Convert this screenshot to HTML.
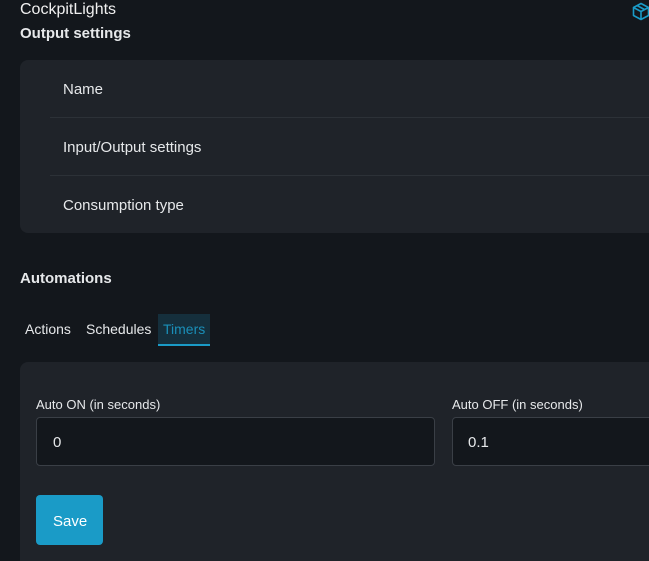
<!DOCTYPE html>
<html><head><style>
*{margin:0;padding:0;box-sizing:border-box}
html,body{width:649px;height:561px;overflow:hidden}
body{background:#13171c;font-family:"Liberation Sans",sans-serif;color:#e6e8ea;position:relative}
.a{position:absolute;white-space:nowrap}
.card{position:absolute;left:20px;width:660px;background:#1f2329;border-radius:8px}
.div{position:absolute;left:30px;right:0;height:1px;background:#2c3137}
.inp{position:absolute;background:#13171c;border:1px solid #3a3f46;border-radius:4px;height:49px}
</style></head><body>
<div class="a" style="left:20px;top:1px;font-size:16px;color:#f0f0f0">CockpitLights</div>
<svg class="a" style="left:632px;top:2px" width="18" height="19" viewBox="0 0 18 19" fill="none" stroke="#1a9bc7" stroke-width="1.6" stroke-linejoin="round"><path d="M9 1.5L16.5 5.5V13.5L9 17.5L1.5 13.5V5.5Z M1.5 5.5L9 9.5L16.5 5.5 M9 9.5V17.5 M5 3.5L12.5 7.5"/></svg>
<div class="a" style="left:20px;top:25px;font-size:15px;font-weight:bold">Output settings</div>
<div class="card" style="top:60px;height:173px">
<div class="div" style="top:57px"></div>
<div class="div" style="top:115px"></div>
</div>
<div class="a" style="left:63px;top:81px;font-size:15px">Name</div>
<div class="a" style="left:63px;top:139px;font-size:15px">Input/Output settings</div>
<div class="a" style="left:63px;top:197px;font-size:15px">Consumption type</div>
<div class="a" style="left:20px;top:270px;font-size:15px;font-weight:bold">Automations</div>
<div class="a" style="left:25px;top:321px;font-size:14px">Actions</div>
<div class="a" style="left:86px;top:321px;font-size:14px">Schedules</div>
<div class="a" style="left:158px;top:314px;width:52px;height:32px;background:#152f3c;border-bottom:2px solid #1a9bc7"></div>
<div class="a" style="left:163px;top:321px;font-size:14px;color:#1a8fb8">Timers</div>
<div class="card" style="top:362px;height:199px;border-radius:8px 8px 0 0"></div>
<div class="a" style="left:36px;top:397px;font-size:13px">Auto ON (in seconds)</div>
<div class="inp" style="left:36px;top:417px;width:399px"></div>
<div class="a" style="left:53px;top:434px;font-size:15px">0</div>
<div class="a" style="left:452px;top:397px;font-size:13px">Auto OFF (in seconds)</div>
<div class="inp" style="left:452px;top:417px;width:220px"></div>
<div class="a" style="left:468px;top:434px;font-size:15px">0.1</div>
<div class="a" style="left:36px;top:495px;width:67px;height:50px;background:#1a9bc7;border-radius:4px"></div>
<div class="a" style="left:53px;top:513px;font-size:15px;color:#fff">Save</div>
</body></html>
